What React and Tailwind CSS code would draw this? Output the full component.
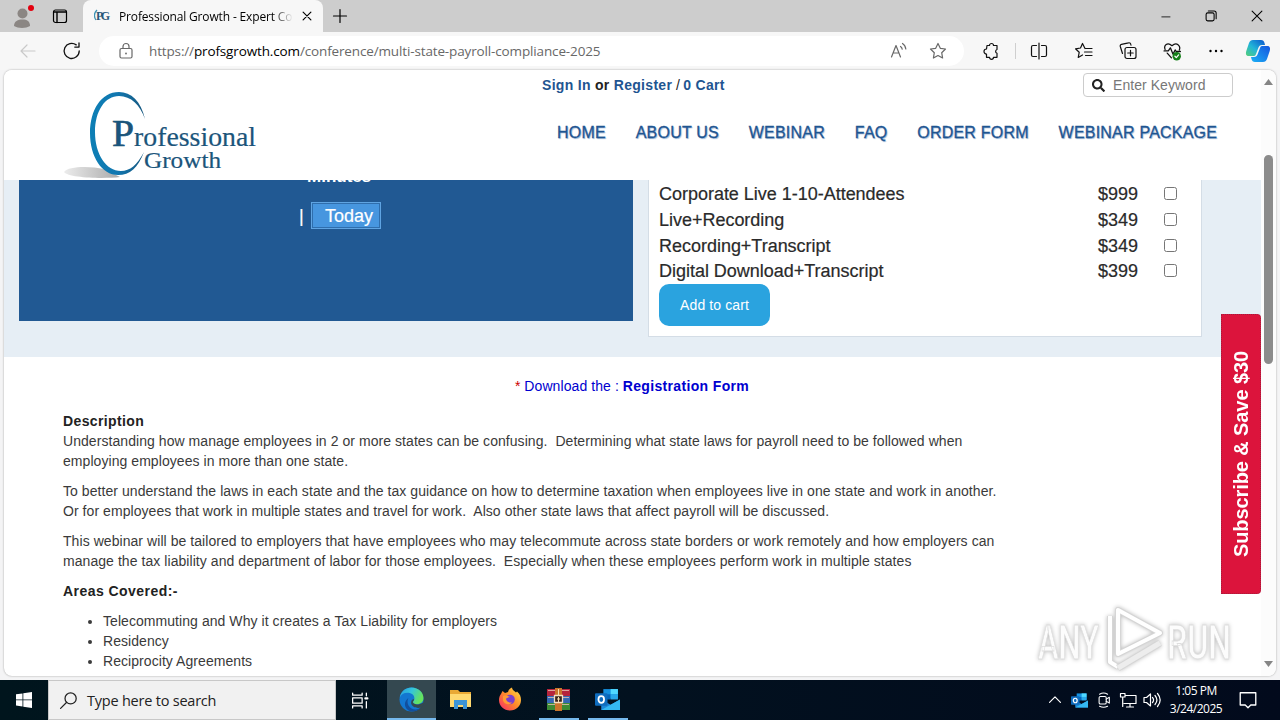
import { VscChromeMinimize } from "react-icons/vsc";
import { FaSearch } from "react-icons/fa";

const navLinks = [
  "HOME",
  "ABOUT US",
  "WEBINAR",
  "FAQ",
  "ORDER FORM",
  "WEBINAR PACKAGE",
];

const prices = [
  { label: "Corporate Live 1-10-Attendees", price: "$999" },
  { label: "Live+Recording", price: "$349" },
  { label: "Recording+Transcript", price: "$349" },
  { label: "Digital Download+Transcript", price: "$399" },
];

const areas = [
  "Telecommuting and Why it creates a Tax Liability for employers",
  "Residency",
  "Reciprocity Agreements",
];

function Icon({ size = 18, className = "", children }) {
  return (
    <svg
      width={size}
      height={size}
      viewBox="0 0 18 18"
      fill="none"
      stroke="currentColor"
      strokeWidth="1.2"
      strokeLinejoin="round"
      strokeLinecap="round"
      className={`shrink-0 ${className}`}
    >
      {children}
    </svg>
  );
}

function TabStrip() {
  return (
    <div className="flex h-8 shrink-0 bg-[#cdcdcd]">
      <div className="flex w-[83px] items-center pl-3">
        <svg width="24" height="28" viewBox="0 0 24 28">
          <circle cx="10.500" cy="11.500" r="5" fill="#8b8683" />
          <path d="M2 24c0-5 4-6.500 8.500-6.500S18 19 18 24c-4 2.500-12 2.500-16 0z" fill="#8b8683" />
          <circle cx="19" cy="6" r="3" fill="#e3000f" />
        </svg>
        <Icon size={18} className="ml-[15px] text-black">
          <rect x="2.500" y="3" width="13" height="12.500" rx="2" strokeWidth="1.200" />
          <path d="M3 5h12M6 5v10.500" strokeWidth="1.400" />
        </Icon>
      </div>
      <div className="flex w-[240px] items-center rounded-t-lg bg-[#f7f7f7] pl-[11px]">
        <svg width="17" height="16" viewBox="0 0 17 16">
          <text x="2" y="12" fontSize="12" fontWeight="bold" fontFamily="Liberation Serif, serif" fill="#285779" textLength="14">
            PG
          </text>
          <path d="M3 2C0 5 0 9 2 12" stroke="#3c93b5" strokeWidth="1.300" fill="none" />
        </svg>
        <span className="ml-[8px] w-[174px] overflow-hidden bg-linear-to-r from-black from-88% to-transparent bg-clip-text pt-px text-[12px] tracking-[-0.150px] whitespace-nowrap text-transparent">
          Professional Growth - Expert Conf
        </span>
        <Icon size={14} className="ml-[7px] text-black">
          <path d="M4 4l10 10M14 4L4 14" strokeWidth="1.500" />
        </Icon>
      </div>
      <div className="flex flex-1 items-center text-black">
        <Icon size={18} className="ml-[8px]">
          <path d="M9 2.500v13M2.500 9h13" strokeWidth="1.200" />
        </Icon>
        <div className="ml-auto flex items-center gap-[30px] pr-[15px]">
          <VscChromeMinimize size={13} className="mr-[1px]" />
          <Icon size={16}>
            <rect x="3.500" y="5.500" width="9" height="9" rx="1.800" />
            <path d="M6 3.300h6.500a2.300 2.300 0 0 1 2.300 2.300V12" />
          </Icon>
          <Icon size={16}>
            <path d="M3.500 3.500l11 11M14.500 3.500l-11 11" />
          </Icon>
        </div>
      </div>
    </div>
  );
}

function Toolbar() {
  return (
    <div className="flex h-[38px] shrink-0 items-center bg-[#f7f7f7] text-[#111]">
      <Icon size={18} className="ml-[19px] text-[#c9c9c9]">
        <path d="M16 9H2M8 3L2 9l6 6" />
      </Icon>
      <Icon size={20} className="ml-[25px]">
        <path d="M15.500 9A6.800 6.800 0 1 1 12.800 3.500M15.300 1.800v3.700h-3.800" />
      </Icon>
      <div className="ml-[17px] flex h-[30px] w-[865px] items-center rounded-full bg-white px-[18px] text-[#686868]">
        <Icon size={18}>
          <rect x="3" y="6.500" width="12" height="9.500" rx="1.500" />
          <path d="M6 6.500V4.500a3 3 0 0 1 6 0v2" />
          <circle cx="9" cy="11.500" r=".9" fill="currentColor" stroke="none" />
        </Icon>
        <span className="ml-[14px] text-[13.500px] tracking-[-0.140px] whitespace-nowrap">
          https://<span className="text-black">profsgrowth.com</span>
          /conference/multi-state-payroll-compliance-2025
        </span>
        <Icon size={18} className="ml-auto">
          <path d="M1.500 15L6 3.500l4.500 11.500M3 11h6M10.500 4.500c1 .7 1.500 1.500 1.700 2.700M12.500 1.500c2 1.300 3.100 3.200 3.300 5.500" />
        </Icon>
        <Icon size={18} className="mr-[-1px] ml-[21px]">
          <path d="M9 1.500l2.300 4.800 5.200.7-3.800 3.700.9 5.300L9 13.500 4.400 16l.9-5.300L1.500 7l5.200-.7z" />
        </Icon>
      </div>
      <Icon size={18} className="ml-[18px]">
        <path d="M5 3.500h2.500a2 2 0 0 1 4 0H15v4a2 2 0 0 0 0 3.800v4h-3.500a2 2 0 0 1-4 0H4.500V12a2.500 2.500 0 0 1 0-5z" />
      </Icon>
      <div className="mx-[15px] h-4 w-px bg-[#cfcfcf]" />
      <Icon size={18} className="-ml-px">
        <path d="M9 1v16M6.500 3.500H3A1.500 1.500 0 0 0 1.500 5v8A1.500 1.500 0 0 0 3 14.500h3.500M11.500 3.500H15A1.500 1.500 0 0 1 16.500 5v8a1.500 1.500 0 0 1-1.500 1.500h-3.500" />
      </Icon>
      <Icon size={18} className="ml-[27px]">
        <path d="M10 6.500L7.500 1.500 5.500 6l-5 .8 3.700 3.500-1 5.200L7.500 13M10.500 6.500h6.500M9.500 10H17M10.500 13.500H17" />
      </Icon>
      <Icon size={18} className="ml-[26px]">
        <rect x="6" y="5.500" width="11" height="11" rx="2" />
        <path d="M11.500 8.300v5.500M8.700 11h5.500M3.500 11.500L1.300 4.500a1.800 1.800 0 0 1 1.200-2.200l7-1.500a1.800 1.800 0 0 1 2.200 1.400l.3 1" />
      </Icon>
      <Icon size={19} className="ml-[26px]">
        <path d="M2 7C.5 3.500 4-.5 8.500 3.500 13-.5 17 3.500 15.500 7.500M4 10.500l4 4.500M1 8.500h4l2-3 2.500 6 2-4 1 1.500h4" />
        <circle cx="13" cy="13.500" r="4" fill="#16801a" stroke="none" />
        <path d="M11.300 13.500l1.300 1.300 2.200-2.600" stroke="white" />
      </Icon>
      <svg width="16" height="6" className="ml-[26px]" viewBox="0 0 16 6">
        <circle cx="2.500" cy="3" r="1.200" />
        <circle cx="8" cy="3" r="1.200" />
        <circle cx="13.500" cy="3" r="1.200" />
      </svg>
      <svg width="26" height="26" className="ml-[21px]" viewBox="0 0 26 26">
        <defs>
          <linearGradient id="cpA" x1="0" y1="1" x2="1" y2="0">
            <stop offset="0" stopColor="#55cf78" />
            <stop offset=".45" stopColor="#22b5d8" />
            <stop offset="1" stopColor="#0a53ce" />
          </linearGradient>
          <linearGradient id="cpB" x1="0" y1="1" x2="1" y2="0">
            <stop offset="0" stopColor="#1bb0f5" />
            <stop offset="1" stopColor="#1455df" />
          </linearGradient>
        </defs>
        <path d="M8 2h8c2 0 3 1 3.500 3l.5 2h-3c-2 0-3 1-3.700 3L11 16c-.7 2-1.500 2-3 2H4c-3 0-3.500-2-2.700-5L4 5c.8-2 2-3 4-3z" fill="url(#cpA)" />
        <path d="M18 24h-8c-2 0-3-1-3.500-3L6 19h3c2 0 3-1 3.700-3L15 10c.7-2 1.500-2 3-2h4c3 0 3.500 2 2.700 5L22 21c-.8 2-2 3-4 3z" fill="url(#cpB)" />
      </svg>
    </div>
  );
}

function Logo() {
  return (
    <svg width="200" height="110" viewBox="60 70 200 110" className="shrink-0">
      <defs>
        <linearGradient id="ring" x1="0" y1="0" x2="1" y2="0">
          <stop offset="0" stopColor="#0d7fb5" />
          <stop offset=".5" stopColor="#1177b0" />
          <stop offset="1" stopColor="#17567d" />
        </linearGradient>
        <linearGradient id="shade" x1="0" y1="0" x2="1" y2="0">
          <stop offset="0" stopColor="#ececec" />
          <stop offset="1" stopColor="#a9a9a9" />
        </linearGradient>
      </defs>
      <path d="M64 172c4-6 26-6 40-3l16 8c-16 2-52 1-56-5z" fill="url(#shade)" />
      <path
        d="M145 119C141 101 131 92 119 92C101 92 90 110 90 133C90 157 102 175 118 175C130 175 138 168 144 152C137 165 130 171 121 171C106 171 95 154 95 132C95 111 105 96 119 96C131 96 140 105 145 119Z"
        fill="url(#ring)"
      />
      <g fontFamily="Liberation Serif, serif" fill="#1b557b" stroke="#1b557b" strokeWidth=".2">
        <text x="112" y="146" fontSize="38" textLength="22" lengthAdjust="spacingAndGlyphs" strokeWidth=".7">
          P
        </text>
        <text x="134" y="146" fontSize="28" textLength="122" lengthAdjust="spacingAndGlyphs">
          rofessional
        </text>
        <text x="144" y="168" fontSize="24" textLength="77" lengthAdjust="spacingAndGlyphs">
          Growth
        </text>
      </g>
    </svg>
  );
}

function SiteHeader() {
  return (
    <header className="flex h-[110px] shrink-0 bg-white pl-14">
      <Logo />
      <div className="flex flex-1 flex-col">
        <div className="flex h-[30px] items-center pr-7">
          <p className="ml-[282px] text-[14px] leading-5 font-bold tracking-[0.300px] whitespace-nowrap text-[#222]">
            <span className="text-[#1f5591]">Sign In</span> or{" "}
            <span className="text-[#1f5591]">Register</span>
            <span className="font-normal tracking-[-0.200px]"> / </span>
            <span className="text-[#1f5591]">0 Cart</span>
          </p>
          <div className="ml-auto flex h-6 w-[150px] items-center rounded border border-[#ccc] pl-2 text-[14px] text-[#777]">
            <FaSearch size={13} className="mr-2 text-[#222]" />
            <span className="tracking-[0.050px]">Enter Keyword</span>
          </div>
        </div>
        <nav className="mt-px ml-[297px] flex h-16 items-center gap-[29.800px] text-[16px] tracking-[0.220px] whitespace-nowrap text-[#1f5591] [-webkit-text-stroke:0.300px] [text-shadow:1px_1px_1px_#9db8d8]">
          {navLinks.map((link) => (
            <a key={link}>{link}</a>
          ))}
        </nav>
      </div>
    </header>
  );
}

function Hero() {
  return (
    <section className="flex h-[177px] shrink-0 gap-[15px] overflow-hidden bg-[#e6eef5] pl-[15px]">
      <div className="h-[141px] w-[614px] overflow-hidden bg-[#215993] text-[18px] text-white">
        <p className="-mt-[14px] ml-[288px] h-[21px] text-[17px] leading-[22px] font-bold">Minutes</p>
        <div className="mt-[15px] ml-[280px] flex h-[27px] items-center gap-[8px] [-webkit-text-stroke:0.200px]">
          <span className="w-[4px] pt-[2px] leading-[27px]">|</span>
          <span className="h-[27px] w-[70px] border border-[#5fa4e2] bg-[#2f6ead] p-px">
            <span className="flex h-full items-center justify-end bg-[#4796df] pt-[2px] pr-[6px]">Today</span>
          </span>
        </div>
      </div>
      <div className="h-[157px] w-[554px] border border-t-0 border-[#d4dde6] bg-white px-[10px] pt-px">
        {prices.map((row) => (
          <label
            key={row.label}
            className="flex h-[25.700px] items-center text-[18px] text-[#2a2a2a] [-webkit-text-stroke:0.200px]"
          >
            <span className="w-[439px] pt-[2px] tracking-[-0.020px]">{row.label}</span>
            <span className="w-[66px] pt-[2px]">{row.price}</span>
            <input type="checkbox" className="size-[13px] appearance-none rounded-[2.500px] border border-[#767676]" />
          </label>
        ))}
        <button className="h-[42px] w-[111px] rounded-[10px] bg-[#2aa3df] pt-[2px] text-[14px] tracking-[0.100px] text-white">
          Add to cart
        </button>
      </div>
    </section>
  );
}

function Article() {
  return (
    <section className="text-[14px] leading-5 text-[#3a3a3a]">
      <p className="mt-[19px] pl-[511px] whitespace-nowrap text-[#0000cf]">
        <span className="text-[#c00]">*</span> <span className="tracking-[0.080px]">Download the :</span>{" "}
        <b className="tracking-[0.340px]">Registration Form</b>
      </p>
      <div className="mt-[15px] ml-[59px] space-y-[10px] tracking-[0.060px] whitespace-nowrap">
        <p>
          <b className="tracking-[0.380px] text-[#222]">Description</b>
          <br />
          Understanding how manage employees in 2 or more states can be
          confusing.&nbsp; Determining what state laws for payroll need to be
          followed when
          <br />
          employing employees in more than one state.
        </p>
        <p>
          To better understand the laws in each state and the tax guidance on
          how to determine taxation when employees live in one state and work
          in another.
          <br />
          Or for employees that work in multiple states and travel for
          work.&nbsp; Also other state laws that affect payroll will be
          discussed.
        </p>
        <p>
          This webinar will be tailored to employers that have employees who
          may telecommute across state borders or work remotely and how
          employers can
          <br />
          manage the tax liability and department of labor for those
          employees.&nbsp; Especially when these employees perform work in
          multiple states
        </p>
        <p>
          <b className="tracking-[0.450px] text-[#222]">Areas Covered:-</b>
        </p>
        <ul className="list-disc pl-10">
          {areas.map((area) => (
            <li key={area}>{area}</li>
          ))}
        </ul>
      </div>
    </section>
  );
}

function Watermark() {
  return (
    <svg width="200" height="68" viewBox="0 0 200 68" className="absolute right-[40px] bottom-[2px] drop-shadow-[0_0_2px_#bbb]">
      <g fontFamily="Roboto, sans-serif" fontSize="49" fontWeight="500" fill="#fcfcfc" stroke="#dedede" strokeWidth=".8">
        <text x="2" y="53" textLength="61" lengthAdjust="spacingAndGlyphs">
          ANY
        </text>
        <text x="131" y="53" textLength="64" lengthAdjust="spacingAndGlyphs">
          RUN
        </text>
      </g>
      <g fill="none" strokeLinejoin="round">
        <path d="M74 10v46l8 5M82 4v44l42-21z" stroke="#d6d6d6" strokeWidth="6" />
        <path d="M74 10v46l8 5M82 4v44l42-21z" stroke="#fff" strokeWidth="4" />
        <path d="M82 62l42-25" stroke="#d6d6d6" strokeWidth="7" />
        <path d="M82 62l42-25" stroke="#ededed" strokeWidth="5" />
      </g>
    </svg>
  );
}

function TaskbarApp({ active, open, children }) {
  return (
    <div className={`flex w-[49px] justify-center ${active ? "bg-[#344850]" : ""}`}>
      <div
        className={`flex h-full items-center justify-center border-b-2 ${active ? "w-full" : "w-10"} ${
          open ? "border-[#76b9ed]" : "border-transparent"
        }`}
      >
        {children}
      </div>
    </div>
  );
}

function OutlookIcon({ size }) {
  return (
    <svg width={size} height={size} viewBox="0 0 24 24">
      <path d="M8 2h14v9H8z" fill="#1490df" />
      <path d="M15 2h7v5h-7z" fill="#50d9ff" />
      <path d="M8 7h7v5H8z" fill="#0364b8" />
      <path d="M15 7h7v5h-7z" fill="#28a8ea" />
      <path d="M6 12l9 5 9-5v10H6z" fill="#1b87d8" />
      <path d="M6 22l18-10v10z" fill="#35b8f1" />
      <rect x="0" y="6" width="12" height="12" rx="1" fill="#0f6cbd" />
      <ellipse cx="6" cy="12" rx="2.700" ry="3.200" fill="none" stroke="#fff" strokeWidth="1.700" />
    </svg>
  );
}

function Taskbar() {
  return (
    <footer className="flex h-10 shrink-0 bg-linear-to-r from-[#00151d] via-[#02111f] to-[#020a1c] text-white">
      <div className="flex w-12 items-center justify-center">
        <svg width="16" height="16" viewBox="0 0 16 16" fill="white">
          <path d="M0 2.300l6.500-.9v6.100H0zM7.300 1.300L16 0v7.500H7.300zM0 8.300h6.500v6.100L0 13.500zM7.300 8.300H16V16l-8.700-1.300z" />
        </svg>
      </div>
      <div className="flex w-[288px] items-center border border-[#c8c8c8] bg-[#f1f1f1] pl-[10px] text-[#222]">
        <Icon size={19}>
          <circle cx="11" cy="7" r="5.300" />
          <path d="M7.300 10.700L1.500 16.500" />
        </Icon>
        <span className="ml-[9px] pt-[2px] text-[14.500px] tracking-[-0.220px]">Type here to search</span>
      </div>
      <div className="flex w-[51px] items-center justify-center pr-[5px]">
        <Icon size={19}>
          <path d="M2.500 2v2h9V2M2.500 16v-2h9v2M2.500 6.500h9v5h-9zM15.500 2v2.500M15.500 10v6" />
          <path d="M14.500 7h2" strokeWidth="2" />
        </Icon>
      </div>
      <TaskbarApp active open>
        <svg width="25" height="25" viewBox="0 0 24 24">
          <defs>
            <linearGradient id="edgeTop" x1="0" y1="0" x2="1" y2=".4">
              <stop offset="0" stopColor="#2599df" />
              <stop offset=".5" stopColor="#34c5dc" />
              <stop offset="1" stopColor="#66e35c" />
            </linearGradient>
          </defs>
          <circle cx="12" cy="12" r="11.500" fill="#1377d1" />
          <path d="M.7 10C2 4 6.500.5 12 .5c7 0 11.500 5 11.500 10 0 4-3 6-6.500 6-2.500 0-3.500-1-3.500-2 0-.8 1.300-1.500 1.300-3.500C14.800 7 11 5.500 8 5.500 4.500 5.500 2 7.500.7 10z" fill="url(#edgeTop)" />
          <path d="M9 10.500c-2.500 5 1 11 7 11 2 0 4-.7 5.500-2C19 22.500 16 23.500 12.500 23.500 6 23 3 15 9 10.500z" fill="#124f9d" />
          <path d="M13.300 14.500c0 1 1.200 2.200 3.700 2.200 2.500 0 4.200-.6 5.500-1.700l1.500 1-1.500 3c-2 1.500-6 1.500-8.500 0-2.500-1.500-3-4-1.800-6.200.8-1 2-1.300 2.300-.8.100.8-1.200 1.500-1.200 2.500z" fill="#344850" />
        </svg>
      </TaskbarApp>
      <TaskbarApp>
        <svg width="23" height="22" viewBox="0 0 23 22">
          <path d="M1 2h8l2 2h11v15H1z" fill="#e9a935" />
          <path d="M1 6h21v13H1z" fill="#ffd970" />
          <path d="M5 12h13v9h-4v-4H9v4H5z" fill="#3d94d6" />
        </svg>
      </TaskbarApp>
      <TaskbarApp>
        <svg width="24" height="24" viewBox="0 0 24 24">
          <defs>
            <linearGradient id="fox" x1="1" y1="0" x2="0" y2="1">
              <stop offset="0" stopColor="#ffe24a" />
              <stop offset=".5" stopColor="#ff8a2a" />
              <stop offset="1" stopColor="#f6246c" />
            </linearGradient>
          </defs>
          <path d="M3 7l1.500-3L7 6l3-1c.5-2 2-4 4-4.500 0 2 2 3.500 4 5l1-1c3 2.500 4 5.500 4 8.500 0 6-5 10.500-11 10.500S1 19 1 13c0-2 .7-4.500 2-6z" fill="url(#fox)" />
          <circle cx="12" cy="12.500" r="4.800" fill="#7a3fd0" />
          <path d="M5 9c3-1 5 0 7 1-2 0-3 1.200-4 1.500 0 3 3 4.500 6 4-2 3-8 2-9-2z" fill="#ff9b35" />
        </svg>
      </TaskbarApp>
      <TaskbarApp open>
        <svg width="25" height="23" viewBox="0 0 25 23">
          <path d="M1 1h23v7H1z" fill="#b4243c" />
          <path d="M1 8h23v7H1z" fill="#3468b4" />
          <path d="M1 15h23v7H1z" fill="#3b8a35" />
          <path d="M2 2.500h21M2 9.500h21M2 16.500h21" stroke="#e6c3b3" strokeWidth=".8" />
          <path d="M9 0h7v23H9z" fill="#c9752c" />
          <path d="M8.500 7.500h8v7h-8z" fill="#382418" stroke="#f3dfc4" strokeWidth="1.300" />
          <path d="M12.500 1v7M11 11h3M12.500 9v5" stroke="#f5dfae" />
        </svg>
      </TaskbarApp>
      <TaskbarApp open>
        <OutlookIcon size={25} />
      </TaskbarApp>
      <div className="ml-auto flex items-center">
        <Icon size={14}>
          <path d="M2 12l7-7 7 7" strokeWidth="1.500" />
        </Icon>
        <span className="ml-[9px]">
          <OutlookIcon size={17} />
        </span>
        <Icon size={16} className="ml-[8px]">
          <rect x="3.500" y="5" width="8" height="8.500" rx="1.500" />
          <path d="M11.500 8l3.500-2v6.500l-3.500-2M4 2.500c3-1.800 6-1.800 9 0M4 16c3 1.500 6 1.500 9 0" />
        </Icon>
        <Icon size={18} className="ml-[7px]">
          <path d="M6 4.500h11v8H5M11 12.500V16M7.500 16h7M1.500 2.500h4.500v3.500H1.500zM3.700 6v9.500" />
        </Icon>
        <Icon size={18} className="ml-[6px]">
          <path d="M1 6.500h2.500L7.500 3v12l-4-3.500H1zM9.500 6.500c1.300 1.500 1.300 3.500 0 5M12 4.500c2.300 2.700 2.300 6.300 0 9M14.500 2.500c3.300 4 3.300 9 0 13" />
        </Icon>
        <div className="w-[70px] text-center text-[12px] leading-[18px] tracking-[-0.500px]">
          1:05 PM
          <br />
          3/24/2025
        </div>
        <Icon size={20} className="mr-[22px] ml-[7px]">
          <path d="M2 2.500h14v11h-4.500L9 16l-2.500-2.500H2z" />
        </Icon>
      </div>
    </footer>
  );
}

export default function App() {
  return (
    <div className="flex h-[720px] w-[1280px] flex-col overflow-hidden bg-[#f4f4f5] font-['Open_Sans',sans-serif]">
      <TabStrip />
      <Toolbar />
      <div className="mx-1 mb-1 flex h-[606px] shrink-0 overflow-hidden rounded-lg bg-white shadow-[0_0_2px_#999]">
        <main className="relative flex w-[1257px] flex-col overflow-hidden font-['Liberation_Sans',Arial,sans-serif]">
          <SiteHeader />
          <Hero />
          <Article />
          {/* sticky side button */}
          <button className="absolute top-[244px] right-0 flex h-[280px] w-10 items-center justify-center rounded-r border border-dotted border-[#a51b3c] bg-[#dc143c]">
            <span className="rotate-180 text-[20px] font-bold tracking-[-0.090px] whitespace-nowrap text-white [writing-mode:vertical-rl]">
              Subscribe &amp; Save $30
            </span>
          </button>
        </main>
        <div className="relative flex w-[15px] flex-col items-center bg-[#fcfcfc] py-[9px]">
          <svg width="9" height="6" viewBox="0 0 9 6" fill="#858585">
            <path d="M0 6l4.500-6L9 6z" />
          </svg>
          <div className="mt-[70px] h-[209px] w-[9px] rounded-full bg-[#8b8b8b]" />
          <svg width="9" height="6" viewBox="0 0 9 6" fill="#858585" className="mt-auto">
            <path d="M0 0l4.500 6L9 0z" />
          </svg>
          <Watermark />
        </div>
      </div>
      <Taskbar />
    </div>
  );
}
